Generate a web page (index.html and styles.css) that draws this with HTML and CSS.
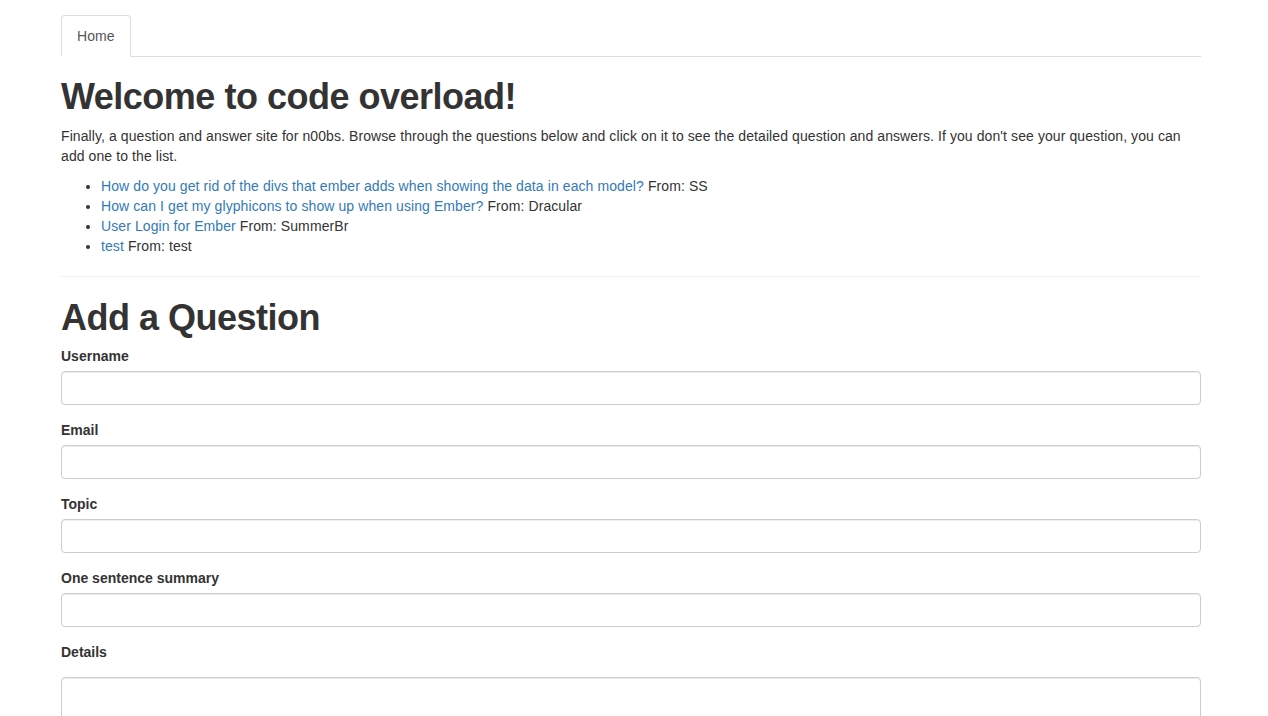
FILE: index.html
```html
<!DOCTYPE html>
<html>
<head>
<meta charset="utf-8">
<title>Code Overload</title>
<link rel="stylesheet" href="styles.css">
</head>
<body>
<div class="container">
  <ul class="nav-tabs">
    <li class="active"><a href="#">Home</a></li>
  </ul>
  <h1 class="welcome">Welcome to code overload!</h1>
  <p>Finally, a question and answer site for n00bs. Browse through the questions below and click on it to see the detailed question and answers. If you don't see your question, you can add one to the list.</p>
  <ul class="questions">
    <li><a href="#">How do you get rid of the divs that ember adds when showing the data in each model?</a> From: SS</li>
    <li><a href="#">How can I get my glyphicons to show up when using Ember?</a> From: Dracular</li>
    <li><a href="#">User Login for Ember</a> From: SummerBr</li>
    <li><a href="#">test</a> From: test</li>
  </ul>
  <hr>
  <h1 class="add">Add a Question</h1>
  <form>
    <div class="form-group">
      <label>Username</label>
      <input class="form-control" type="text">
    </div>
    <div class="form-group">
      <label>Email</label>
      <input class="form-control" type="text">
    </div>
    <div class="form-group">
      <label>Topic</label>
      <input class="form-control" type="text">
    </div>
    <div class="form-group">
      <label>One sentence summary</label>
      <input class="form-control" type="text">
    </div>
    <div class="form-group">
      <label>Details</label>
      <textarea class="form-control details" rows="5"></textarea>
    </div>
  </form>
</div>
</body>
</html>
```
FILE: styles.css
```css
* { box-sizing: border-box; }
html, body { margin: 0; padding: 0; background: #fff; }
body {
  font-family: "Liberation Sans", Arial, sans-serif;
  font-size: 14px;
  line-height: 20px;
  color: #333;
  letter-spacing: 0.09px;
}
a { color: #337ab7; text-decoration: none; }
.container {
  width: 1140px;
  margin-left: 61px;
  padding-top: 15px;
}
.nav-tabs {
  list-style: none;
  margin: 0;
  padding: 0;
  display: flex;
  border-bottom: 1px solid #ddd;
}
.nav-tabs li { margin-bottom: -1px; }
.nav-tabs li a {
  display: block;
  padding: 10px 15px;
  line-height: 20px;
  color: #555;
  border: 1px solid transparent;
  border-radius: 4px 4px 0 0;
}
.nav-tabs li.active a {
  background: #fff;
  border-color: #ddd #ddd transparent #ddd;
}
h1 {
  font-size: 36px;
  font-weight: bold;
  letter-spacing: -0.5px;
  line-height: 1.1;
  margin: 20px 0 10px;
  color: #333;
}
h1.welcome { margin-bottom: 9px; }
h1.add { margin-top: 21px; margin-bottom: 9px; }
p { margin: 0 0 10px; }
.questions { margin: 0 0 10px; padding-left: 40px; }
hr {
  margin: 20px 0;
  border: 0;
  border-top: 1px solid #eee;
  height: 0;
}
.form-group { margin-bottom: 15px; }
label {
  display: inline-block;
  margin-bottom: 5px;
  font-weight: bold;
  letter-spacing: 0;
}
.form-control {
  display: block;
  width: 100%;
  height: 34px;
  padding: 6px 12px;
  font: inherit;
  color: #555;
  background: #fff;
  border: 1px solid #ccc;
  border-radius: 4px;
  box-shadow: inset 0 1px 1px rgba(0,0,0,.075);
}
textarea.form-control.details {
  height: 110px;
  margin-top: 10px;
  resize: vertical;
}
```
